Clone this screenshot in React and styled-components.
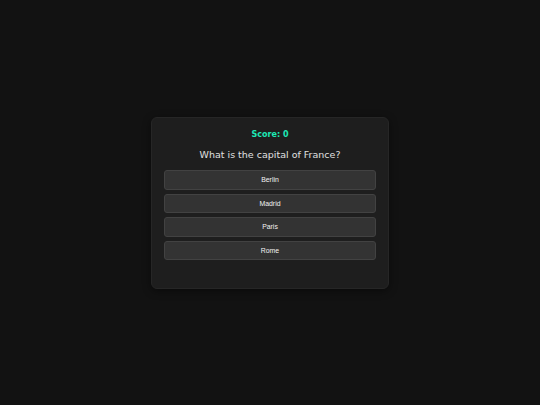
import React, { useState } from "react";
import styled, { createGlobalStyle } from "styled-components";

const GlobalStyle = createGlobalStyle`
  html, body {
    margin: 0;
    padding: 0;
    background: #121212;
  }
  #root {
    min-height: 100vh;
  }
`;

const Page = styled.div`
  min-height: 100vh;
  display: flex;
  align-items: center;
  justify-content: center;
  padding-top: 1px;
  box-sizing: border-box;
  background: #121212;
  font-family: "DejaVu Sans", sans-serif;
`;

const Card = styled.div`
  width: 238px;
  box-sizing: border-box;
  background: #1e1e1e;
  border: 1px solid #262626;
  border-radius: 6px;
  padding: 12px 12px 12px;
  box-shadow: 0 2px 8px rgba(0, 0, 0, 0.45);
  display: flex;
  flex-direction: column;
  align-items: stretch;
`;

const Score = styled.div`
  color: #1de9b6;
  font-weight: bold;
  font-size: 8px;
  line-height: 9.5px;
  text-align: center;
`;

const Question = styled.div`
  color: #e0e0e0;
  font-size: 9.5px;
  line-height: 11px;
  text-align: center;
  margin: 9px 0 10.5px;
`;

const Options = styled.div`
  display: flex;
  flex-direction: column;
  gap: 4px;
`;

const Option = styled.button`
  font-family: "Liberation Sans", Arial, sans-serif;
  font-size: 6.9px;
  line-height: 7.5px;
  padding: 5px 0;
  background: #333333;
  color: #f2f2f2;
  border: 1px solid #424242;
  border-radius: 3px;
  cursor: pointer;
  text-align: center;
`;

const Feedback = styled.div`
  min-height: 16px;
`;

const question = {
  text: "What is the capital of France?",
  options: ["Berlin", "Madrid", "Paris", "Rome"],
  answer: "Paris",
};

export default function App() {
  const [score, setScore] = useState(0);
  return (
    <>
      <GlobalStyle />
      <Page>
        <Card>
          <Score>Score: {score}</Score>
          <Question>{question.text}</Question>
          <Options>
            {question.options.map((o) => (
              <Option
                key={o}
                onClick={() => o === question.answer && setScore((s) => s + 1)}
              >
                {o}
              </Option>
            ))}
          </Options>
          <Feedback />
        </Card>
      </Page>
    </>
  );
}
